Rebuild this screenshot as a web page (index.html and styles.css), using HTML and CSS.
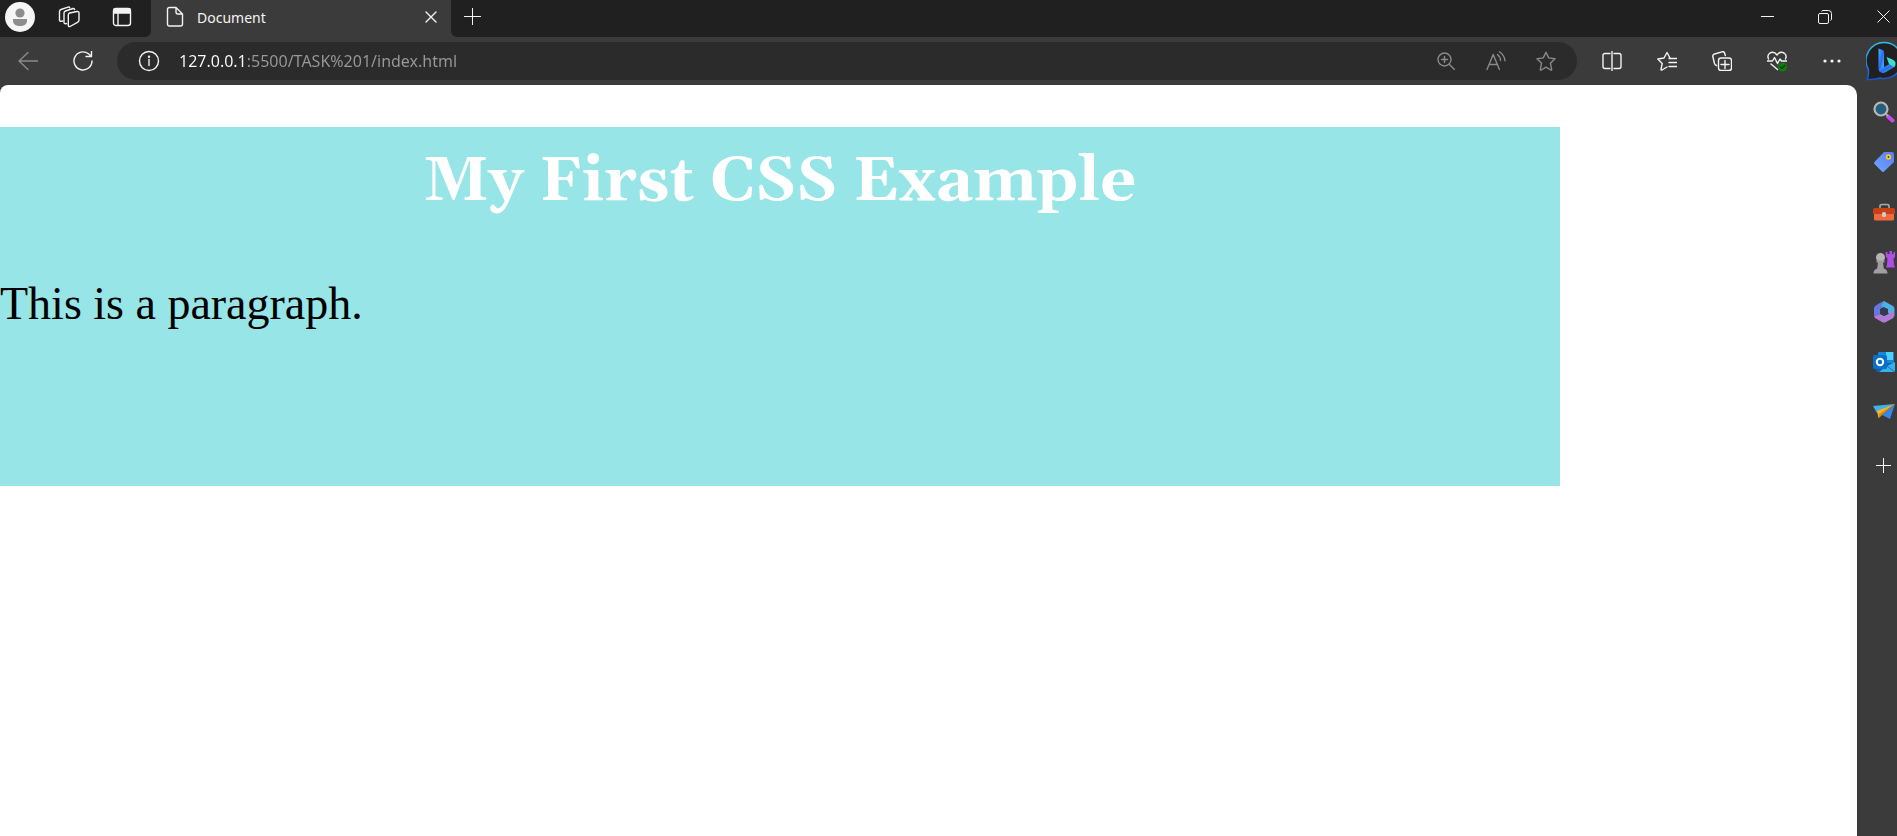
FILE: index.html
```html
<!DOCTYPE html>
<html lang="en">
<head>
<meta charset="utf-8">
<title>Document</title>
<link rel="stylesheet" href="styles.css">
</head>
<body>
<div class="browser">
  <header class="tabstrip">
    <div class="strip-start">
      <button class="strip-button profile" aria-label="Profile"><svg width="30" height="30" viewBox="0 0 30 30"><circle cx="15" cy="15" r="15" fill="#f6f6f6"/><circle cx="15" cy="11" r="4.6" fill="#8d8d8d"/><path d="M8 17h14v2c0 3-3 5-7 5s-7-2-7-5z" fill="#8d8d8d"/></svg></button>
      <button class="strip-button" aria-label="Workspaces"><svg class="line" width="22" height="22" viewBox="0 0 22 22"><path d="M11.500 7l7.500-1.500q2-.3 2 1.500v7q0 1.500-1.500 2.300L12 20.500q-1.500.4-1.700-1.200V9q0-1.600 1.200-2z"/><path d="M8.500 17.500l-1 .2q-1.500.1-1.500-1.500V7q0-1.500 1.500-2L15 2.500q1.300-.3 1.700 1M4.500 15l-1 .2Q1.500 15.500 1.500 14V5.500q0-1.500 1.500-2L10 1.200q1.200-.4 1.700.5"/></svg></button>
      <button class="strip-button" aria-label="Tab actions"><svg class="line" width="20" height="20" viewBox="0 0 20 20"><rect x="1.500" y="1.500" width="17" height="17" rx="2.500"/><path d="M2 2h16v4H2z" fill="#f3f3f3"/><path d="M6 6v12"/></svg></button>
    </div>
    <div class="tab">
      <svg class="line" width="18" height="22" viewBox="0 0 18 22"><path d="M3.500 1.500H10l6.500 6.500v10q0 2-2 2h-11q-2 0-2-2v-14.500q0-2 2-2zM10 1.500V6q0 2 2 2h4.500"/></svg>
      <span class="tab-title">Document</span>
      <button class="tab-close" aria-label="Close tab"><svg class="line" width="12" height="12" viewBox="0 0 12 12"><path d="M1 1l10 10M11 1L1 11"/></svg></button>
    </div>
    <div class="strip-end">
      <button class="new-tab" aria-label="New tab"><svg class="line thin" width="18" height="18" viewBox="0 0 18 18"><path d="M8.500 0v17M0 8.500h17"/></svg></button>
      <div class="window-controls">
        <button aria-label="Minimize"><svg class="line thin" width="13" height="13" viewBox="0 0 13 13"><path d="M0 6.500h13"/></svg></button>
        <button aria-label="Restore"><svg class="line thin" width="14" height="14" viewBox="0 0 14 14"><rect x=".5" y="3.500" width="10" height="10" rx="1.500"/><path d="M3.500 1.500q.5-1 1.500-1h5.500q3 0 3 3V9q0 1-1 1.500"/></svg></button>
        <button aria-label="Close"><svg class="line thin" width="13" height="13" viewBox="0 0 13 13"><path d="M.5.5l12 12M12.500.5l-12 12"/></svg></button>
      </div>
    </div>
  </header>

  <nav class="toolbar">
    <button class="tool dim" aria-label="Back"><svg class="line" width="20" height="20" viewBox="0 0 20 20"><path d="M10 1.500L1 10l9 8.500M1 10h19"/></svg></button>
    <button class="tool" aria-label="Refresh"><svg class="line" width="20" height="20" viewBox="0 0 20 20"><path d="M19 10a9 9 0 1 1-3.500-7.200L18 5M18.500 0v5.500H13"/></svg></button>
    <div class="address">
      <button class="site-info" aria-label="Site information"><svg class="line" width="22" height="22" viewBox="0 0 22 22"><circle cx="11" cy="11" r="9.500"/><path d="M11 9.500v6"/><circle cx="11" cy="6.800" r=".5"/></svg></button>
      <input class="url" type="text" aria-label="Address" value="127.0.0.1:5500/TASK%201/index.html">
      <button class="address-action" aria-label="Zoom"><svg class="line" width="18" height="18" viewBox="0 0 18 18"><circle cx="7.500" cy="7.500" r="6.500"/><path d="M12.200 12.200L17.500 17.500M7.500 4.500v6M4.500 7.500h6"/></svg></button>
      <button class="address-action" aria-label="Read aloud"><svg class="line" width="20" height="20" viewBox="0 0 20 20"><path d="M1 18.500L7.200 3.500 13.400 18.500M3 13.500h8.500M11.500 3.500q3 2.500 3 6M13.500.8q5 3.500 5.500 9"/></svg></button>
      <button class="address-action" aria-label="Add to favorites"><svg class="line" width="20" height="20" viewBox="0 0 20 20"><path d="M10 1.200l2.700 5.700 6.300.9-4.600 4.400 1.300 6.500q-.2.700-1 .3L10 16.200 5.300 19q-.8.400-1-.3l1.300-6.500L1 7.800l6.300-.9z"/></svg></button>
    </div>
    <div class="tools">
      <button class="tool" aria-label="Split screen"><svg class="line" width="20" height="20" viewBox="0 0 20 20"><path d="M8 2.500H3q-2 0-2 2v11q0 2 2 2h5M12 2.500h5q2 0 2 2v11q0 2-2 2h-5M10 0v20"/></svg></button>
      <button class="tool" aria-label="Favorites"><svg class="line" width="20" height="20" viewBox="0 0 20 20"><path d="M13 7L10 1.500 7 7 .8 8l4.400 4.500L4 18.500q0 .8 1 .5l5-3M12 7.500h8M12 11.500h8M12 15.500h8"/></svg></button>
      <button class="tool" aria-label="Collections"><svg class="line" width="20" height="20" viewBox="0 0 20 20"><rect x="6.500" y="7" width="13" height="12.500" rx="2.500"/><path d="M13 9.500v8M9 13.500h8M4.500 14.500Q3 14 2.500 12.500L.8 5.500Q.5 3.500 2.500 3L10 .8q2-.5 2.500 1L13.300 4.500"/></svg></button>
      <button class="tool" aria-label="Browser essentials"><svg class="line" width="20" height="21" viewBox="0 0 20 21"><path d="M1.500 8Q-.2 4 3 2 7 0 10 4q3-4 7-2 3.200 2 1.500 6M0 10h5.500L7.500 6.500l3 6L13 8l1.500 2H20M4 13l6.500 5.500"/><circle cx="15.500" cy="16" r="4.500" fill="#107c10" stroke="none"/><path d="M13.500 16l1.500 1.500 2.500-3" stroke="#073f07"/></svg></button>
      <button class="tool" aria-label="Settings and more"><svg width="18" height="20" viewBox="0 0 18 20" fill="#f3f3f3"><circle cx="2" cy="10" r="1.600"/><circle cx="9" cy="10" r="1.600"/><circle cx="16" cy="10" r="1.600"/></svg></button>
      <button class="bing" aria-label="Bing chat"><svg width="38" height="40" viewBox="0 0 38 40"><defs><linearGradient id="ring" x1="0" y1="0" x2="0" y2="1"><stop stop-color="#30bff0"/><stop offset="1" stop-color="#1754d2"/></linearGradient><linearGradient id="bee" x1="0" y1="0" x2="1" y2="1"><stop stop-color="#4eb0ff"/><stop offset=".5" stop-color="#276ef0"/><stop offset="1" stop-color="#49cbe8"/></linearGradient></defs><path d="M19 1.500a18 18 0 1 1-5 35.500Q8 39 1.300 38.500 3 34 2.300 28A18 18 0 0 1 19 1.500z" fill="#202020" stroke="url(#ring)" stroke-width="1.500"/><path d="M12.500 7.500l4 1.500q1.500.5 1.500 2v16l-2 4.500q-3.500-.5-3.500-3.500z" fill="url(#bee)"/><path d="M13 29l10.500-6 5.500 2.500-9 5.500q-5 2.500-7-2z" fill="url(#bee)"/><path d="M20.500 16l6 2.500q3.500 1.500 3 5-.2 1.500-1.500 2.500L23 23z" fill="#3edbd6"/></svg></button>
    </div>
  </nav>

  <div class="body">
    <main class="page">
      <section class="banner">
        <h1 class="banner-title">My First CSS Example</h1>
        <p class="banner-text">This is a paragraph.</p>
      </section>
    </main>
    <aside class="sidebar">
      <button aria-label="Search"><svg width="22" height="22" viewBox="0 0 22 22"><path d="M15 15.500l4.500 4" stroke="#c548ec" stroke-width="4" stroke-linecap="round"/><path d="M12 12l3 3" stroke="#a8a8a8" stroke-width="2"/><circle cx="8" cy="8" r="6.500" fill="#23607f" stroke="#b9b7b5" stroke-width="2.200"/></svg></button>
      <button aria-label="Shopping"><svg width="22" height="22" viewBox="0 0 22 22"><defs><linearGradient id="tag" x1="1" y1="0" x2="0" y2="1"><stop stop-color="#5b79f5"/><stop offset="1" stop-color="#6fa9ff"/></linearGradient></defs><path d="M11 1h8q2 0 2 2v8L11 20.500q-1 1-2 0L1.500 13q-1-1 0-2z" fill="url(#tag)"/><circle cx="15.500" cy="6" r="1.800" fill="#274052" stroke="#f7cf18" stroke-width="1.800"/></svg></button>
      <button aria-label="Tools"><svg width="22" height="22" viewBox="0 0 22 22"><path d="M7 7V5q0-1.500 2-1.500h5q2 0 2 1.500v2" fill="none" stroke="#aaa" stroke-width="1.600"/><path d="M1 11h20v7q0 1.500-1.500 1.500h-17Q1 19.500 1 18z" fill="#f06a3e"/><path d="M0 9q0-2 2-2h18q2 0 2 2v4H0z" fill="#c84216"/><rect x="9" y="11" width="4" height="5" rx="1.500" fill="#c9cdcf"/></svg></button>
      <button aria-label="Games"><svg width="22" height="24" viewBox="0 0 22 24"><path d="M12.500 2h2v2h2V1h2.500v3h1.500V2H22v5l-1.500 1.500.5 6 1 3h-9l1-3 .5-6L13 7z" fill="#b04ce8"/><circle cx="7.500" cy="7.500" r="4.500" fill="#b5b5b5"/><path d="M3.500 10.500h8v2H10l.8 6q3.700 1 3.700 5h-14q0-4 3.700-5l.8-6H3.500z" fill="#9f9f9f"/></svg></button>
      <button aria-label="Microsoft 365"><svg width="22" height="22" viewBox="0 0 22 22"><path d="M11 0Q6 2 2 5 1 6 1 8v7l6-2V8l6-3z" fill="#6478de"/><path d="M11 0l9 5q1.500 1 1.500 3v7L15 12V8L8 5z" fill="#4bb1e6"/><path d="M1 15l6-2 4 2 10-5v5q0 1.500-1.500 2.500L13 21q-2 1-4 0l-7-4z" fill="#b17bd8"/><path d="M11 6.500l4 2.500v4l-4 2-4-2.500V9z" fill="#343b50"/></svg></button>
      <button aria-label="Outlook"><svg width="22" height="22" viewBox="0 0 22 22"><rect x="5" y="1" width="16" height="16" rx="1" fill="#1688d8"/><path d="M13 1h7v8h-7z" fill="#50d0f5"/><path d="M3 12h18v9H5q-2 0-2-2z" fill="#155ca5"/><path d="M22 11v8q0 2-2 2H6l8-6z" fill="#34b2ed"/><path d="M14 15l8 6" stroke="#1676bd"/><rect y="4" width="14" height="14" rx="1.500" fill="#0870c9"/><circle cx="7" cy="11" r="3.200" fill="none" stroke="#fff" stroke-width="2"/></svg></button>
      <button aria-label="Drop"><svg width="22" height="22" viewBox="0 0 22 22"><path d="M0 5l22-2-18 9z" fill="#40b2f1"/><path d="M22 3l-5 15-8-4z" fill="#3586ed"/><path d="M22 3L4 10l1.500 7 3.500-5z" fill="#f8b91d"/><path d="M22 3L9 14l-3 3v-4z" fill="#d98b12"/></svg></button>
      <button aria-label="Add to sidebar"><svg class="line thin" width="22" height="22" viewBox="0 0 22 22"><path d="M10.500 3v15M3 10.500h15"/></svg></button>
    </aside>
  </div>
</div>
</body>
</html>
```
FILE: styles.css
```css
* {
  box-sizing: border-box;
}

body {
  margin: 0;
  background: #3b3b3b;
  font-family: "Noto Sans", "Open Sans", sans-serif;
}

button {
  display: flex;
  align-items: center;
  justify-content: center;
  margin: 0;
  padding: 0;
  border: 0;
  background: none;
  color: #f3f3f3;
  flex-shrink: 0;
}

svg {
  display: block;
  flex-shrink: 0;
}

.line {
  fill: none;
  stroke: #f3f3f3;
  stroke-width: 1.4;
  stroke-linecap: round;
  stroke-linejoin: round;
}

.thin {
  stroke-width: 1;
  stroke-linecap: butt;
}

.browser {
  display: flex;
  flex-direction: column;
  min-height: 100vh;
  overflow: hidden;
}

.tabstrip {
  display: flex;
  height: 37px;
}

.strip-start,
.strip-end {
  display: flex;
  background: #202020;
}

.strip-start {
  width: 151px;
  padding-bottom: 3px;
  border-bottom-right-radius: 6px;
}

.strip-button {
  width: 53px;
}

.strip-button.profile {
  width: 42px;
  padding-right: 2px;
}

.tab {
  display: flex;
  align-items: center;
  width: 300px;
  padding: 0 14px 3px 15px;
}

.tab-title {
  flex: 1;
  margin-left: 13px;
  color: #f3f3f3;
  font-size: 14px;
}

.strip-end {
  flex: 1;
  justify-content: space-between;
  padding-bottom: 4px;
  border-bottom-left-radius: 6px;
}

.new-tab {
  width: 44px;
}

.window-controls {
  display: flex;
  margin-right: -15px;
}

.window-controls button {
  width: 58px;
}

.toolbar {
  display: flex;
  align-items: center;
  height: 48px;
}

.tool {
  width: 55px;
  height: 46px;
}

.dim .line,
.address-action .line {
  stroke: #8a8a8a;
}

.address {
  display: flex;
  align-items: center;
  flex: 1;
  height: 38px;
  margin: 0 7px;
  padding: 0 6px 0 16px;
  border-radius: 19px;
  background: #2b2b2b;
}

.site-info {
  width: 32px;
  height: 32px;
}

.url {
  flex: 1;
  min-width: 0;
  margin-left: 14px;
  padding: 0;
  border: 0;
  outline: 0;
  background: linear-gradient(90deg, #fff 66px, #999 66px);
  background-clip: text;
  color: transparent;
  font-family: inherit;
  font-size: 16px;
}

.address-action {
  width: 50px;
  height: 32px;
}

.tools {
  display: flex;
  align-items: center;
}

.bing {
  justify-content: flex-start;
  width: 38px;
  padding-left: 7px;
}

.body {
  display: flex;
  flex: 1;
}

.page {
  flex: 1;
  padding-top: 42px;
  border-radius: 8px 10px 0 0;
  background: #fff;
}

.banner {
  width: 84%;
  padding: 15px 0 154px;
  background: #97e5e6;
}

.banner-title {
  margin: 0;
  color: #fff;
  font-family: Georgia, Gelasio, "Liberation Serif", serif;
  font-size: 63px;
  line-height: 80px;
  text-align: center;
}

.banner-text {
  margin: 54px 0 0;
  color: #000;
  font-family: "Liberation Serif", serif;
  font-size: 46px;
  line-height: 56px;
}

.sidebar {
  display: flex;
  flex-direction: column;
  width: 40px;
  padding-top: 2px;
}

.sidebar button {
  justify-content: flex-start;
  height: 50px;
  padding-left: 16px;
}

.sidebar button:last-child {
  margin-top: 4px;
}
```
